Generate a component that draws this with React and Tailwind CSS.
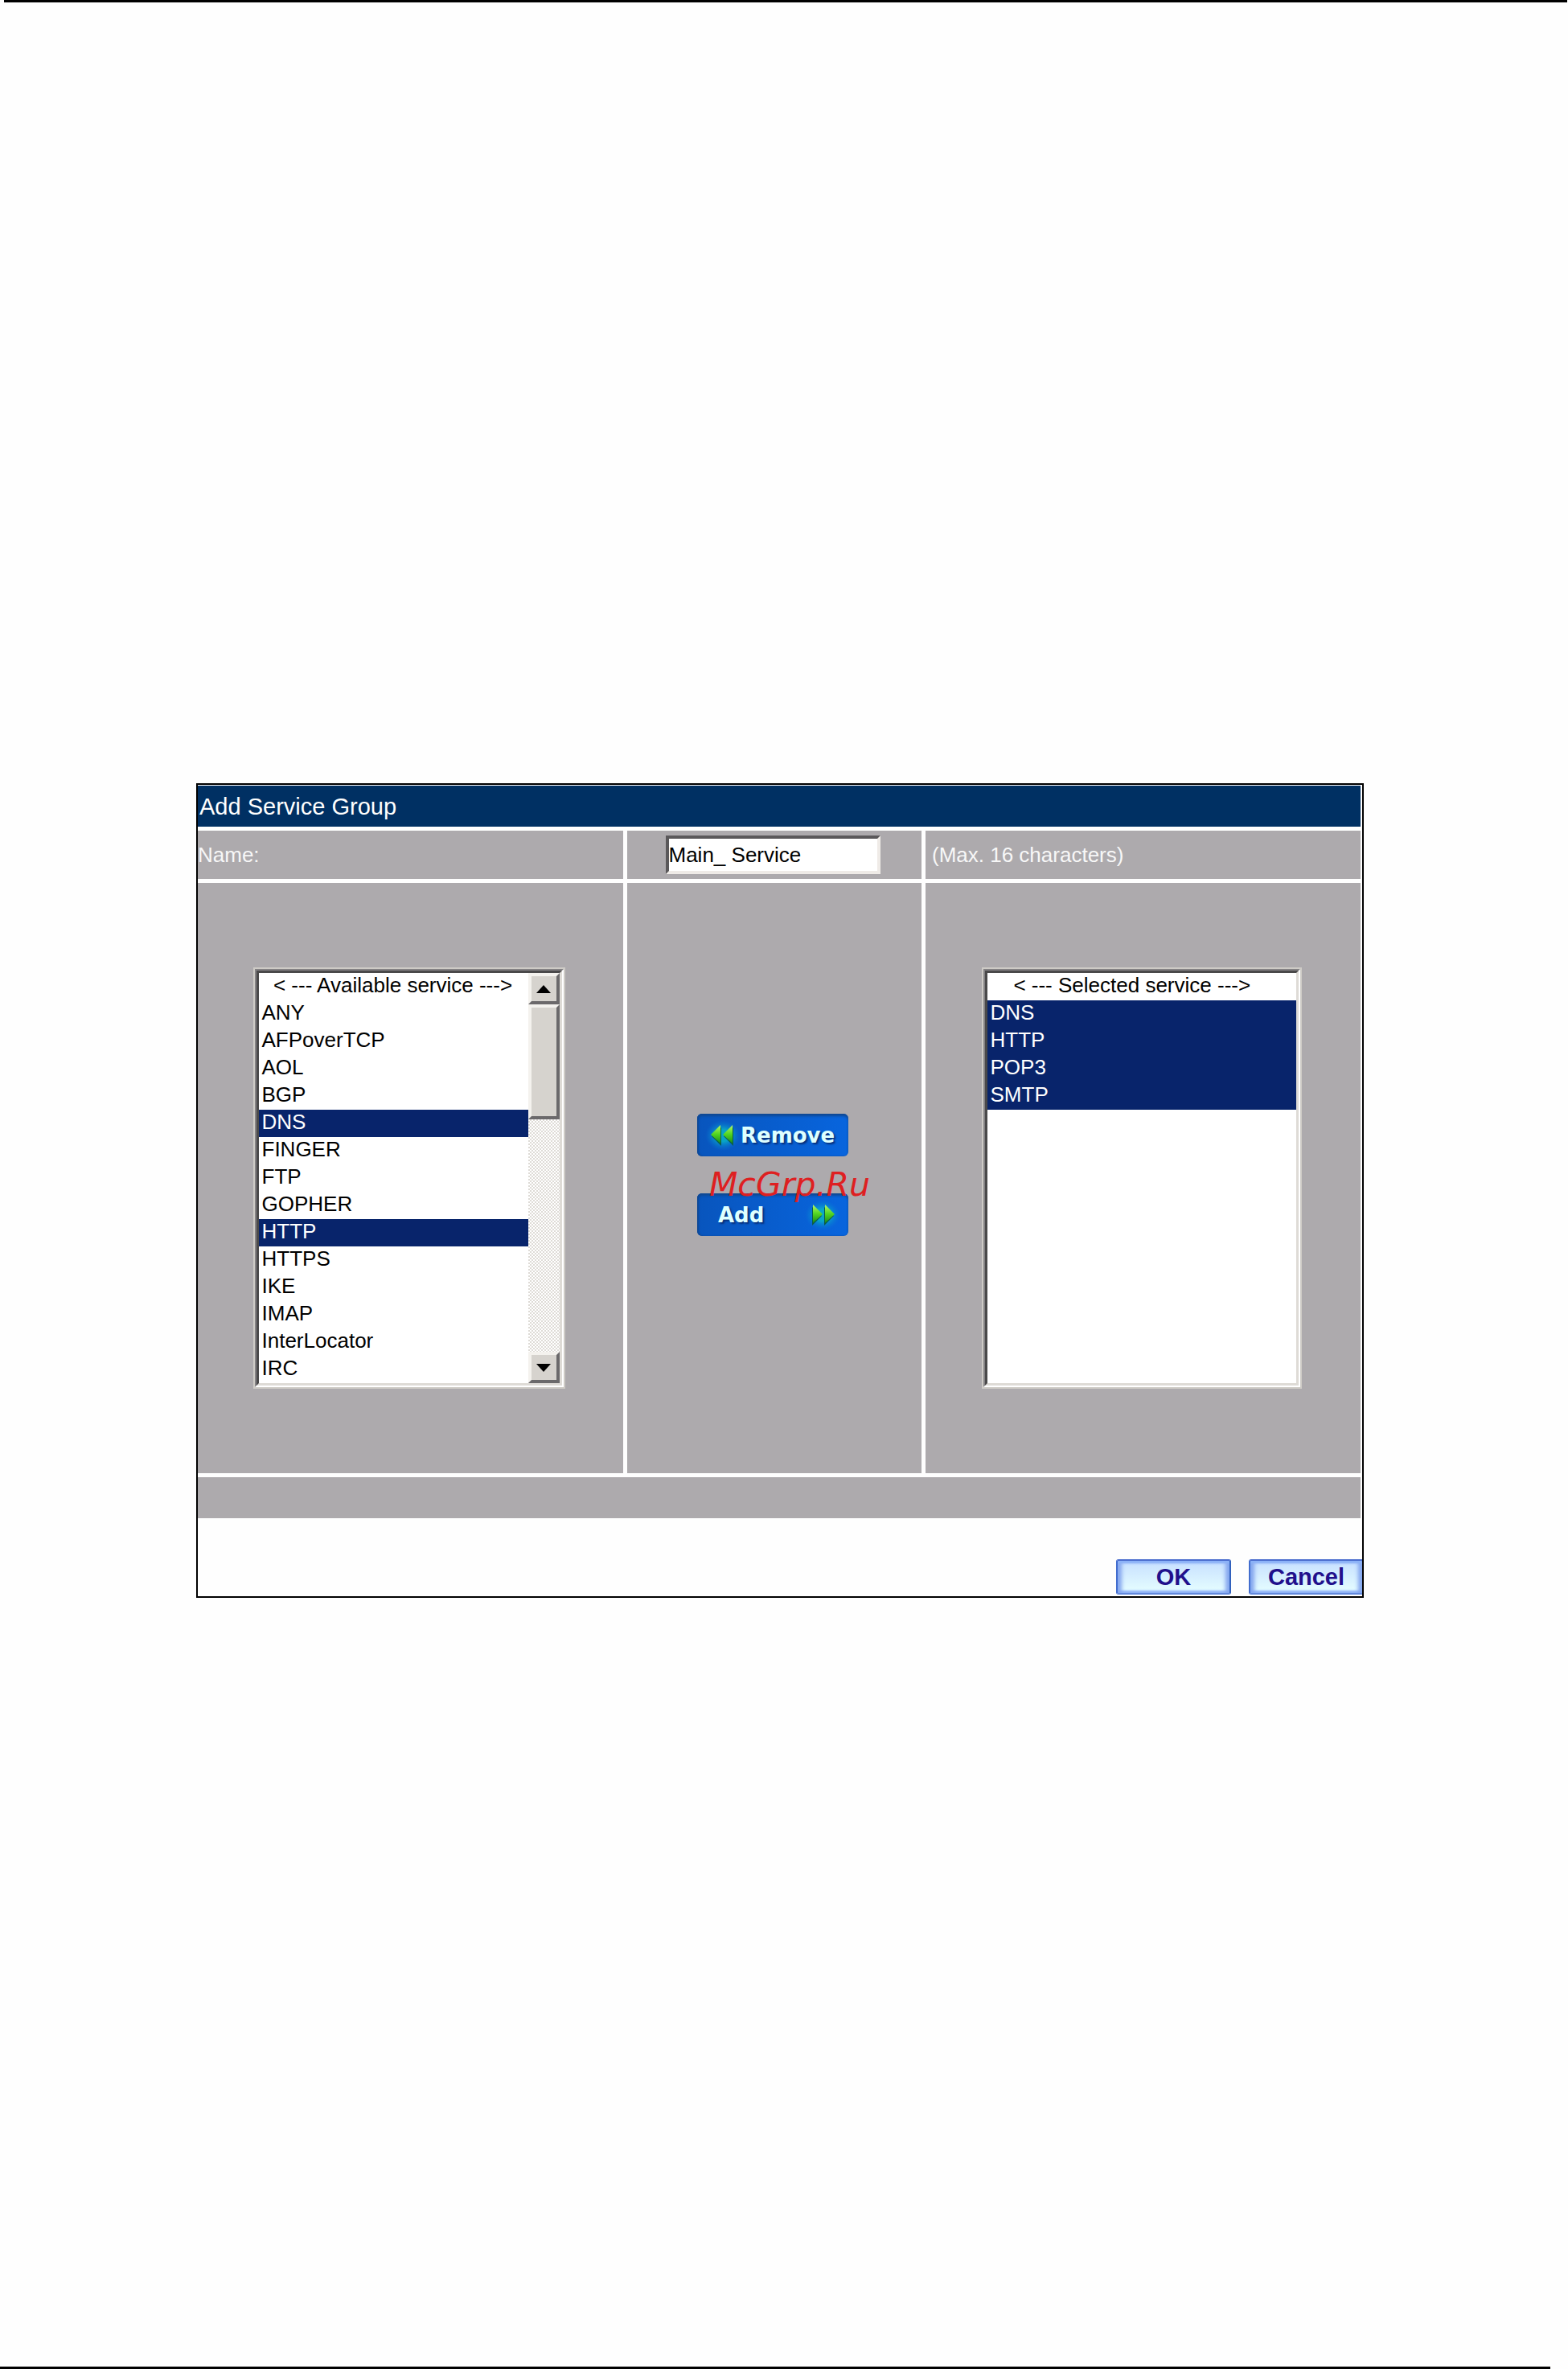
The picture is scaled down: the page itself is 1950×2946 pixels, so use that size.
import React, { useState } from 'react';

const AVAILABLE = [
  'ANY', 'AFPoverTCP', 'AOL', 'BGP', 'DNS', 'FINGER', 'FTP', 'GOPHER',
  'HTTP', 'HTTPS', 'IKE', 'IMAP', 'InterLocator', 'IRC',
];
const SELECTED = ['DNS', 'HTTP', 'POP3', 'SMTP'];

export default function App() {
  const [name, setName] = useState('Main_ Service');
  const [available, setAvailable] = useState(['DNS', 'HTTP']);
  const [selected, setSelected] = useState(SELECTED);

  return (
    <div className="min-h-screen flex flex-col bg-[#fefefe] font-['Liberation_Sans',Arial,sans-serif] text-[26px] leading-[34px] text-black">
      <hr className="ml-[5px] mr-px border-0 h-[3px] bg-black" />

      <main className="mt-[971px] ml-[244px] mr-[254px] mb-16 border-2 border-black pt-px pb-[2px] overflow-hidden">
        <form onSubmit={(e) => e.preventDefault()}>
          <div className="mr-[2px] grid grid-cols-[529fr_366fr_541fr] gap-[5px]">
            {/* Title */}
            <h1 className="col-span-3 h-[51px] flex items-center pl-[2px] bg-[#003063] text-white text-[29px]">
              Add Service Group
            </h1>

            {/* Name row */}
            <div className="bg-[#adaaad] text-[#f7f7f7] flex items-center">
              <label htmlFor="group-name">Name:</label>
            </div>
            <div className="bg-[#adaaad] flex justify-center py-[6px] pr-1">
              <input
                id="group-name"
                type="text"
                maxLength={16}
                value={name}
                onChange={(e) => setName(e.target.value)}
                className="w-[267px] h-12 bg-white outline-none border-4 border-t-[#5a585a] border-l-[#5a585a] border-b-[#efebe7] border-r-[#efebe7]"
              />
            </div>
            <div className="bg-[#adaaad] text-[#f7f7f7] flex items-center pl-2">(Max. 16 characters)</div>

            {/* Service lists */}
            <div className="bg-[#adaaad] flex justify-center py-[105px] pr-1">
              <ServiceList
                label="Available service"
                indent={'\u00a0\u00a0'}
                items={AVAILABLE}
                value={available}
                onChange={setAvailable}
                className="w-[388px]"
                scrollbar
              />
            </div>
            <div className="relative bg-[#adaaad] flex flex-col items-center justify-center gap-[46px] pb-2 pr-1">
              <MoveButton>
                <Arrows className="ml-[10px]" left />
                <span>Remove</span>
              </MoveButton>
              <MoveButton>
                <span className="ml-[26px]">Add</span>
                <Arrows className="ml-auto mr-[10px]" />
              </MoveButton>
              <span className="absolute left-[102px] top-[352px] leading-[46px] text-[41px] italic text-[#de2021] font-['DejaVu_Sans',sans-serif] pointer-events-none">
                McGrp.Ru
              </span>
            </div>
            <div className="bg-[#adaaad] flex justify-center py-[105px] pr-1">
              <ServiceList
                label="Selected service"
                indent={'\u00a0\u00a0\u00a0\u00a0'}
                items={SELECTED}
                value={selected}
                onChange={setSelected}
                className="w-[398px]"
              />
            </div>

            <div className="col-span-3 h-[51px] bg-[#adaaad]" />
          </div>

          {/* Actions */}
          <div className="mt-[51px] -mr-[2px] flex justify-end gap-[22px]">
            <ActionButton>OK</ActionButton>
            <ActionButton>Cancel</ActionButton>
          </div>
        </form>
      </main>

      <hr className="mt-auto mr-[22px] border-0 h-[3px] bg-black" />
    </div>
  );
}

function ServiceList({ label, indent, items, value, onChange, className, scrollbar }) {
  return (
    <div className={`border-2 border-[#cecbc6] ${className}`}>
      <div className="border-2 border-t-[#848284] border-l-[#848284] border-b-white border-r-white">
        <div className="flex h-[516px] border-[3px] border-t-[#4a494a] border-l-[#4a494a] border-b-[#dedbd6] border-r-[#dedbd6] bg-white">
          <select
            multiple
            size={15}
            aria-label={label}
            value={value}
            onChange={(e) => onChange(Array.from(e.target.selectedOptions, (o) => o.value))}
            className="flex-1 min-w-0 h-[510px] p-0 bg-white border-0 rounded-none outline-none overflow-hidden text-[26px] text-black"
          >
            <ListOption value="">{`${indent}< --- ${label} --->`}</ListOption>
            {items.map((item) => (
              <ListOption key={item} value={item}>{item}</ListOption>
            ))}
          </select>
          {scrollbar && <ScrollBar />}
        </div>
      </div>
    </div>
  );
}

function ListOption({ value, children }) {
  return (
    <option
      value={value}
      className="h-[34px] min-h-0 p-0 pl-1 leading-[36px] text-black checked:text-white checked:bg-[linear-gradient(#08246b,#08246b)]"
    >
      {children}
    </option>
  );
}

const raised =
  'block w-full shrink-0 bg-[#d6d3ce] border-[4px] border-t-[#f4f2ee] border-l-[#f4f2ee] border-b-[#6b696b] border-r-[#6b696b]';

function ScrollBar() {
  return (
    <div className="w-[39px] shrink-0 flex flex-col bg-[#e9e7e4] bg-[conic-gradient(#fff_25%,#dedbd6_0_50%,#fff_0_75%,#dedbd6_0)] bg-[length:4px_4px]">
      <button type="button" aria-label="Scroll up" className={`${raised} h-[39px]`}>
        <svg viewBox="0 0 18 10" className="mx-auto w-[18px] h-[10px]"><path d="M9 0 18 10H0z" /></svg>
      </button>
      <div className={`${raised} h-[143px]`} />
      <button type="button" aria-label="Scroll down" className={`${raised} h-[39px] mt-auto`}>
        <svg viewBox="0 0 18 10" className="mx-auto w-[18px] h-[10px]"><path d="M0 0H18L9 10z" /></svg>
      </button>
    </div>
  );
}

function MoveButton({ children }) {
  return (
    <button
      type="button"
      className="w-[188px] h-[53px] flex items-center rounded-[6px] bg-linear-to-r from-[#0855bd] to-[#0865de] shadow-[inset_0_3px_3px_#104994,inset_2px_0_2px_#104994] text-[#deffff] text-[26px] font-bold font-['DejaVu_Sans',Verdana,sans-serif] [text-shadow:2px_2px_2px_#08307b]"
    >
      {children}
    </button>
  );
}

function Arrows({ left, className }) {
  return (
    <svg viewBox="0 0 44 44" className={`w-[44px] h-[44px] shrink-0 ${className}`}>
      <defs>
        <linearGradient id="arrow-green" x1="0" y1="0" x2="0" y2="1">
          <stop offset="0" stopColor="#b5f76b" />
          <stop offset="0.5" stopColor="#52d521" />
          <stop offset="1" stopColor="#188a18" />
        </linearGradient>
        <radialGradient id="arrow-glow">
          <stop offset="0.4" stopColor="#08b6c6" stopOpacity="0.8" />
          <stop offset="1" stopColor="#0879d6" stopOpacity="0" />
        </radialGradient>
      </defs>
      <ellipse cx="22" cy="22" rx="22" ry="19" fill="url(#arrow-glow)" />
      <g transform={left ? undefined : 'matrix(-1 0 0 1 44 0)'}>
        <path d="M8 23 20 12V35z" fill="#0b5a4a" />
        <path d="M23 23 35 12V35z" fill="#0b5a4a" />
        <path d="M7 21 19 9V32z" fill="url(#arrow-green)" />
        <path d="M22 21 34 9V32z" fill="url(#arrow-green)" />
      </g>
    </svg>
  );
}

function ActionButton({ children }) {
  return (
    <button
      type="button"
      className="w-[143px] h-[44px] shrink-0 rounded-[3px] border-2 border-t-[#4a6dce] border-l-[#426dce] border-r-[#3161bd] border-b-[#638ade] bg-linear-to-b from-[#c6dfff] to-[#e7ffff] shadow-[inset_0_3px_2px_#8cb2f7,inset_5px_0_5px_#84a6ef,inset_-5px_0_5px_#84a6ef,inset_0_-3px_2px_#a5c7ff] text-[#21108c] text-[29px] leading-[40px] font-bold"
    >
      {children}
    </button>
  );
}
